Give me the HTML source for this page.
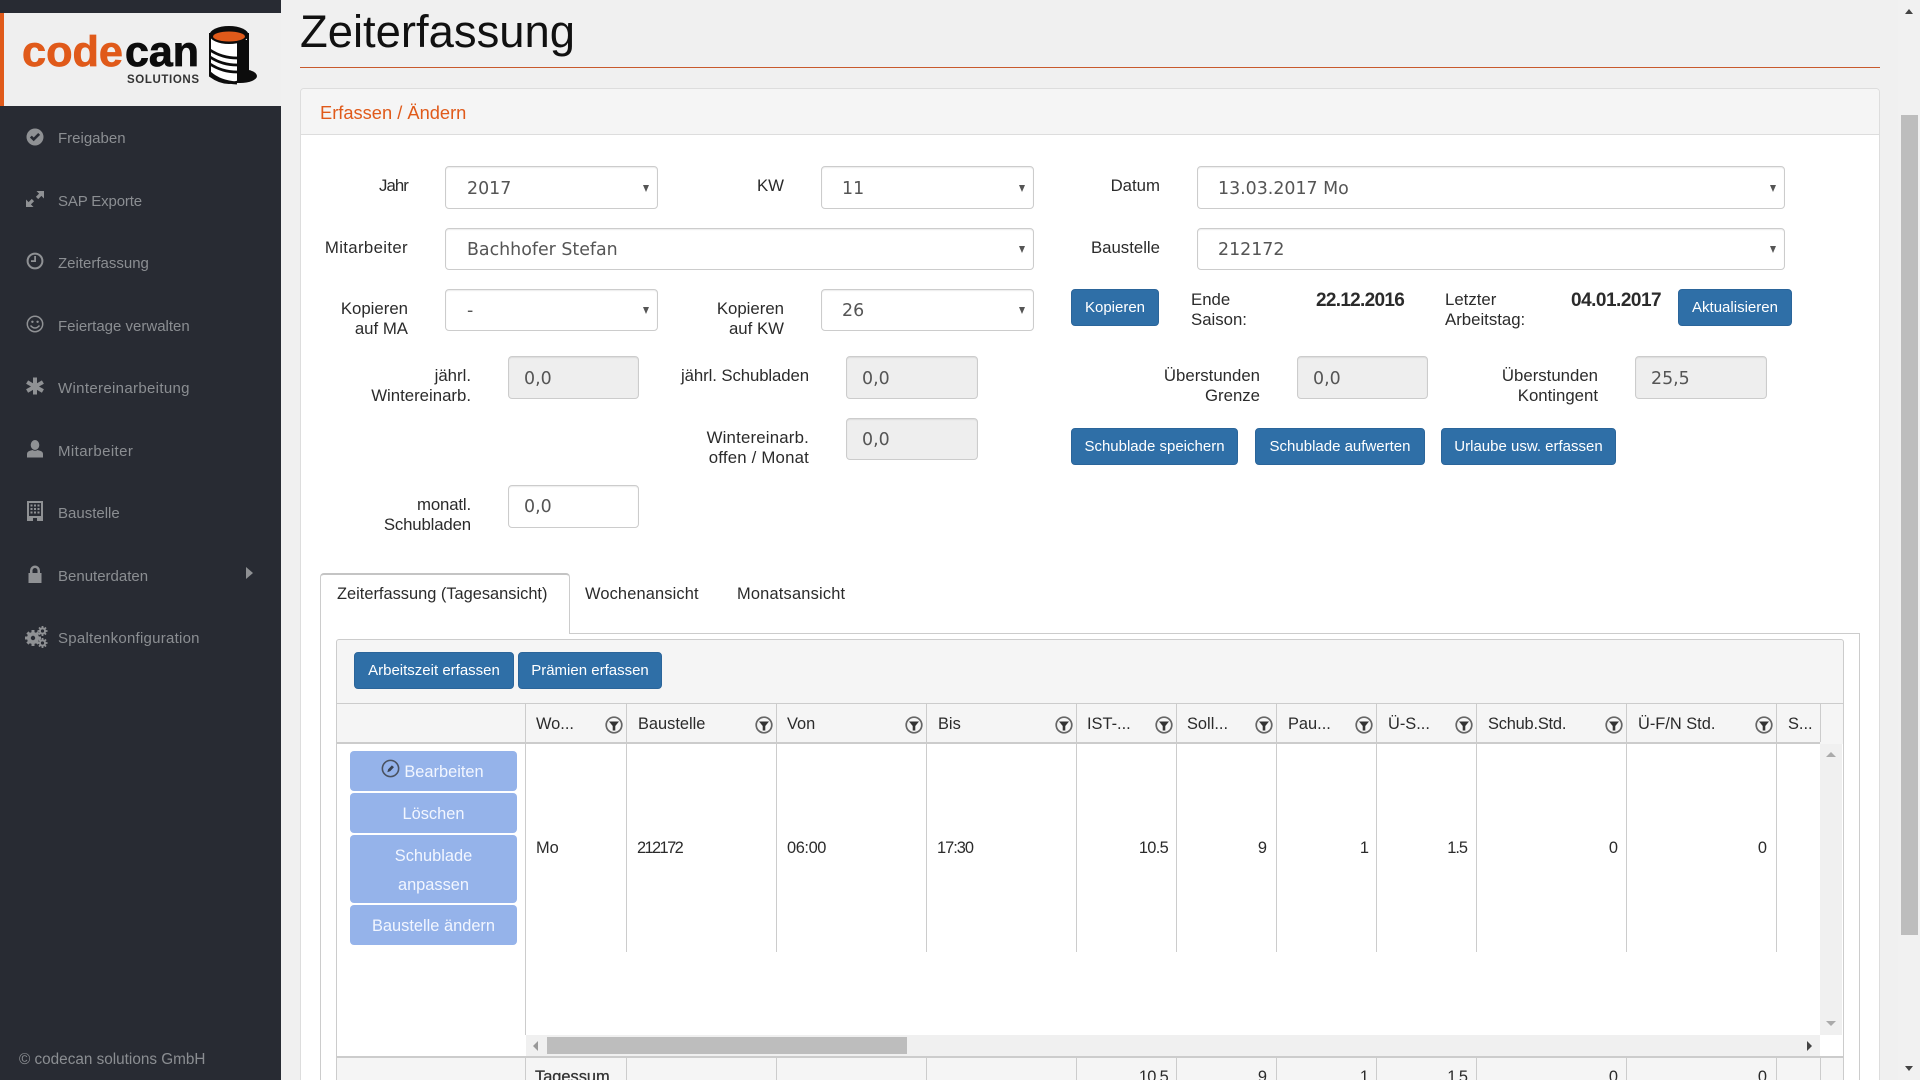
<!DOCTYPE html>
<html lang="de"><head><meta charset="utf-8"><title>Zeiterfassung</title>
<style>
html,body{margin:0;padding:0;width:1920px;height:1080px;overflow:hidden;background:#f0f0f0}
body{position:relative;font-family:"Liberation Sans",sans-serif;color:#2b2b2b}
.a,.t,.r,.c,.s,.i,.b,.v,.tv,.m{position:absolute;box-sizing:border-box}
.t,.r,.c{white-space:nowrap;line-height:20px;font-size:16.8px;margin-top:1px}
.t.h,.r.h{font-size:16.4px}
.r{text-align:right}
.side{left:0;top:0;width:281px;height:1080px;background:#282b33}
.m{left:58px;color:#8b8e92;font-size:15px;line-height:20px;white-space:nowrap;margin-top:1px}
.ic{position:absolute;left:25px;width:20px;height:20px;fill:#8f9194}
.s,.i{border:1px solid #ccc;border-radius:4px;background:#fff;box-shadow:inset 0 1px 1px rgba(0,0,0,.08)}
.i.g{background:#eee}
.s:after{content:"";position:absolute;right:8px;top:50%;margin-top:-3px;border:3.5px solid transparent;border-top:7px solid #555;border-bottom:0}
.v{white-space:nowrap;font-family:"DejaVu Sans",sans-serif;font-size:17.4px;line-height:20px;color:#555;margin-top:1px}
.b{background:#2f6fa7;border:1px solid #2b659a;border-radius:4px;color:#fff;font-size:15px;line-height:35px;text-align:center;white-space:nowrap;height:37px}
.lb{position:absolute;box-sizing:border-box;left:350px;width:167px;background:#95b3ea;border-radius:4px;color:#f2f6ff;font-size:16.4px;text-align:center;line-height:43px}
.line{position:absolute;background:#ccc}
.f{position:absolute;top:716px;width:18px;height:18px}
</style></head><body>
<svg width="0" height="0" style="position:absolute"><defs>
<symbol id="flt" viewBox="0 0 18 18"><circle cx="9" cy="9" r="7.800" fill="none" stroke="#666" stroke-width="1.700"/><path d="M4 5.500h10L10.300 10v4.500H7.700V10z" fill="#333"/></symbol>
</defs></svg>

<div class="a side"></div>
<div class="a" style="left:0;top:13px;width:281px;height:93px;background:#efefef"></div>
<div class="a" style="left:0;top:13px;width:4px;height:93px;background:#e05a1a"></div>
<svg class="a" style="left:0;top:0" width="281" height="106" viewBox="0 0 281 106">
<text x="22" y="66" font-family="Liberation Sans" font-weight="700" font-size="43" fill="#e05a1a" stroke="#e05a1a" stroke-width=".7" textLength="101" lengthAdjust="spacingAndGlyphs">code</text>
<text x="125" y="66" font-family="Liberation Sans" font-weight="700" font-size="43" fill="#0c0c0c" stroke="#0c0c0c" stroke-width=".8" textLength="74" lengthAdjust="spacingAndGlyphs">can</text>
<text x="127" y="83" font-family="Liberation Sans" font-weight="700" font-size="11.5" fill="#333" textLength="72">SOLUTIONS</text>
<ellipse cx="240" cy="76" rx="17" ry="7" fill="#0c0c0c"/>
<path d="M210 34V76Q229 90 248 76V34Z" fill="#fff" stroke="#0c0c0c" stroke-width="2"/>
<path d="M237 40H249V77Q244 82 237 83Z" fill="#0c0c0c"/>
<path d="M210 50Q222 58 237 58M210 57Q222 65 237 65M210 64Q222 72 237 72" fill="none" stroke="#0c0c0c" stroke-width="2.800"/>
<path d="M210 73Q220 82 237 83" fill="none" stroke="#0c0c0c" stroke-width="3"/>
<ellipse cx="229" cy="35" rx="19.500" ry="9" fill="#0c0c0c"/>
<ellipse cx="229" cy="36.500" rx="16" ry="5" fill="#e05a1a"/>
</svg>

<!-- menu -->
<svg class="ic" style="top:127px" viewBox="0 0 20 20"><path fill-rule="evenodd" d="M10 1.500a8.500 8.500 0 1 0 0 17 8.500 8.500 0 0 0 0-17zM8.700 14.300 4.900 10.500l1.900-1.900 1.900 1.900 4.500-4.500 1.900 1.900z"/></svg>
<div class="m" style="top:128px">Freigaben</div>
<svg class="ic" style="top:189px" viewBox="0 0 20 20"><path d="M11.500 2H19V9.500L16.400 6.900 13.200 10.100 10.900 7.800 14.100 4.600zM8.500 18H1V10.500L3.600 13.100 6.800 9.900 9.100 12.200 5.900 15.400z"/></svg>
<div class="m" style="top:191px;letter-spacing:-.15px">SAP Exporte</div>
<svg class="ic" style="top:251px" viewBox="0 0 20 20"><circle cx="10" cy="10" r="7.400" fill="none" stroke="#8f9194" stroke-width="2"/><path d="M9.200 5h1.800v6H6v-1.700h3.200z"/></svg>
<div class="m" style="top:253px">Zeiterfassung</div>
<svg class="ic" style="top:314px" viewBox="0 0 20 20"><circle cx="10" cy="10" r="7.700" fill="none" stroke="#8f9194" stroke-width="1.500"/><circle cx="7.400" cy="7.800" r="1.200"/><circle cx="12.600" cy="7.800" r="1.200"/><path d="M5.500 11.500Q10 16.500 14.500 11.500" fill="none" stroke="#8f9194" stroke-width="1.500"/></svg>
<div class="m" style="top:316px">Feiertage verwalten</div>
<svg class="ic" style="top:376px" viewBox="0 0 20 20"><path d="M8 1.500h4V7.200l4.900-2.800 2 3.400L14 10.500l4.900 2.800-2 3.400L12 13.900v4.600H8v-4.600l-4.900 2.800-2-3.400L6 10.500 1.100 7.800l2-3.400L8 7.200z"/></svg>
<div class="m" style="top:378px;letter-spacing:.33px">Wintereinarbeitung</div>
<svg class="ic" style="top:439px" viewBox="0 0 20 20"><ellipse cx="10" cy="6" rx="4.300" ry="5"/><path d="M2 18.500V15q0-2.500 3-3.300l2.500-.7q2.500 1.500 5 0l2.500.7q3 .8 3 3.300v3.500z"/></svg>
<div class="m" style="top:441px;letter-spacing:.4px">Mitarbeiter</div>
<svg class="ic" style="top:500px;height:22px" viewBox="0 0 20 22"><path fill-rule="evenodd" d="M2 1h16v20H12v-3H8v3H2zM4 3v13h12V3z"/><path d="M5.500 4.500h2v2h-2zM9 4.500h2v2H9zM12.500 4.500h2v2h-2zM5.500 8h2v2h-2zM9 8h2v2H9zM12.500 8h2v2h-2zM5.500 11.500h2v2h-2zM9 11.500h2v2H9zM12.500 11.500h2v2h-2z"/></svg>
<div class="m" style="top:503px">Baustelle</div>
<svg class="ic" style="top:564px" viewBox="0 0 20 20"><path fill-rule="evenodd" d="M3.500 9H5V6.500a5 5 0 0 1 10 0V9h1.500v10h-13zM7.500 9h5V6.500a2.500 2.500 0 0 0-5 0z"/></svg>
<div class="m" style="top:566px">Benuterdaten</div>
<div class="a" style="left:246px;top:567px;border-left:7px solid #8f9194;border-top:6px solid transparent;border-bottom:6px solid transparent"></div>
<svg class="ic" style="top:625px;left:24px;width:24px;height:24px" viewBox="0 0 24 24">
<g fill="#8f9194"><circle cx="9" cy="13" r="6"/><g stroke="#8f9194" stroke-width="3"><path d="M9 5v16M1 13h16M3.400 7.400l11.200 11.200M14.600 7.400 3.400 18.600"/></g></g><circle cx="9" cy="13" r="2.200" fill="#282b33"/>
<g fill="none" stroke="#8f9194"><circle cx="18.500" cy="6" r="2.600" stroke-width="2"/><path stroke-width="1.800" d="M18.500 1v2M18.500 9v2M13.500 6h2M21.500 6h2M15 2.500l1.400 1.400M20.600 8.100 22 9.500M22 2.500l-1.400 1.400M16.400 8.100 15 9.500"/><circle cx="18.500" cy="18" r="2.600" stroke-width="2"/><path stroke-width="1.800" d="M18.500 13v2M18.500 21v2M13.500 18h2M21.500 18h2M15 14.500l1.400 1.400M20.600 20.100l1.400 1.400M22 14.500l-1.400 1.400M16.400 20.100 15 21.500"/></g></svg>
<div class="m" style="top:628px;letter-spacing:.25px">Spaltenkonfiguration</div>
<div class="m" style="left:19px;top:1049px;font-size:15.300px">© codecan solutions GmbH</div>

<!-- page scrollbar -->
<div class="a" style="left:1898px;top:0;width:22px;height:1080px;background:#f1f1f1"></div>
<div class="a" style="left:1901px;top:115px;width:17px;height:820px;background:#bdbdbd"></div>
<div class="a" style="left:1905px;top:9px;border:4.500px solid transparent;border-bottom:5px solid #444;border-top:0"></div>
<div class="a" style="left:1905px;top:1066px;border:4.500px solid transparent;border-top:5px solid #444;border-bottom:0"></div>

<!-- title -->
<div class="a" style="left:300px;top:4px;font-size:45.400px;line-height:56px;color:#111;white-space:nowrap">Zeiterfassung</div>
<div class="a" style="left:300px;top:67px;width:1580px;height:1px;background:#c8592c"></div>

<!-- panel -->
<div class="a" style="left:300px;top:88px;width:1580px;height:1010px;background:#fff;border:1px solid #ddd;border-radius:4px"></div>
<div class="a" style="left:301px;top:89px;width:1578px;height:46px;background:#f5f5f5;border-bottom:1px solid #ddd;border-radius:3px 3px 0 0"></div>
<div class="a" style="left:320px;top:100px;font-size:18.300px;line-height:25px;color:#e05a1a;white-space:nowrap">Erfassen / Ändern</div>

<!-- row 1 -->
<div class="r" style="right:1512px;top:175px;letter-spacing:-.9px">Jahr</div>
<div class="s" style="left:445px;top:166px;width:213px;height:43px"></div><div class="v" style="left:467px;top:178px">2017</div>
<div class="r" style="right:1136px;top:175px">KW</div>
<div class="s" style="left:821px;top:166px;width:213px;height:43px"></div><div class="v" style="left:842px;top:178px">11</div>
<div class="r" style="right:760px;top:175px">Datum</div>
<div class="s" style="left:1197px;top:166px;width:588px;height:43px"></div><div class="v" style="left:1218px;top:178px">13.03.2017 Mo</div>
<!-- row 2 -->
<div class="r" style="right:1512px;top:237px;letter-spacing:.35px">Mitarbeiter</div>
<div class="s" style="left:445px;top:228px;width:589px;height:42px"></div><div class="v" style="left:467px;top:239px">Bachhofer Stefan</div>
<div class="r" style="right:760px;top:237px">Baustelle</div>
<div class="s" style="left:1197px;top:228px;width:588px;height:42px"></div><div class="v" style="left:1218px;top:239px">212172</div>
<!-- row 3 -->
<div class="r" style="right:1512px;top:298px">Kopieren<br>auf MA</div>
<div class="s" style="left:445px;top:289px;width:213px;height:42px"></div><div class="v" style="left:467px;top:300px">-</div>
<div class="r" style="right:1136px;top:298px">Kopieren<br>auf KW</div>
<div class="s" style="left:821px;top:289px;width:213px;height:42px"></div><div class="v" style="left:842px;top:300px">26</div>
<div class="b" style="left:1071px;top:289px;width:88px">Kopieren</div>
<div class="t" style="left:1191px;top:289px">Ende<br>Saison:</div>
<div class="t" style="left:1316px;top:290px;font-weight:700;font-size:19px;letter-spacing:-.7px">22.12.2016</div>
<div class="t" style="left:1445px;top:289px">Letzter<br>Arbeitstag:</div>
<div class="t" style="left:1571px;top:290px;font-weight:700;font-size:19px;letter-spacing:-.5px">04.01.2017</div>
<div class="b" style="left:1678px;top:289px;width:114px">Aktualisieren</div>
<!-- row 4 -->
<div class="r" style="right:1449px;top:365px">jährl.<br>Wintereinarb.</div>
<div class="i g" style="left:508px;top:356px;width:131px;height:43px"></div><div class="v" style="left:524px;top:368px">0,0</div>
<div class="r" style="right:1111px;top:365px;letter-spacing:-.1px">jährl. Schubladen</div>
<div class="i g" style="left:846px;top:356px;width:132px;height:43px"></div><div class="v" style="left:862px;top:368px">0,0</div>
<div class="r" style="right:660px;top:365px">Überstunden<br>Grenze</div>
<div class="i g" style="left:1297px;top:356px;width:131px;height:43px"></div><div class="v" style="left:1313px;top:368px">0,0</div>
<div class="r" style="right:322px;top:365px">Überstunden<br>Kontingent</div>
<div class="i g" style="left:1635px;top:356px;width:132px;height:43px"></div><div class="v" style="left:1651px;top:368px">25,5</div>
<!-- row 5 -->
<div class="r" style="right:1111px;top:427px;letter-spacing:.2px">Wintereinarb.<br>offen / Monat</div>
<div class="i g" style="left:846px;top:418px;width:132px;height:42px"></div><div class="v" style="left:862px;top:429px">0,0</div>
<div class="b" style="left:1071px;top:428px;width:167px">Schublade speichern</div>
<div class="b" style="left:1255px;top:428px;width:170px">Schublade aufwerten</div>
<div class="b" style="left:1441px;top:428px;width:175px">Urlaube usw. erfassen</div>
<!-- row 6 -->
<div class="r" style="right:1449px;top:494px;letter-spacing:-.15px">monatl.<br>Schubladen</div>
<div class="i" style="left:508px;top:485px;width:131px;height:43px"></div><div class="v" style="left:524px;top:496px">0,0</div>

<!-- tabs -->
<div class="a" style="left:320px;top:633px;width:1540px;height:460px;border:1px solid #ccc;border-bottom:0"></div>
<div class="a" style="left:320px;top:573px;width:250px;height:61px;background:#fff;border:1px solid #ccc;border-top:2px solid #c4c4c4;border-bottom:0;border-radius:4px 4px 0 0"></div>
<div class="t h" style="left:337px;top:583px">Zeiterfassung (Tagesansicht)</div>
<div class="t h" style="left:585px;top:583px;letter-spacing:.15px">Wochenansicht</div>
<div class="t h" style="left:737px;top:583px;letter-spacing:.2px">Monatsansicht</div>

<!-- grid container -->
<div class="a" style="left:336px;top:639px;width:1508px;height:460px;background:#f5f5f5;border:1px solid #ccc;border-radius:3px"></div>
<div class="b" style="left:354px;top:652px;width:160px">Arbeitszeit erfassen</div>
<div class="b" style="left:518px;top:652px;width:144px">Prämien erfassen</div>

<div class="line" style="left:337px;top:703px;width:1506px;height:1px"></div>
<div class="a" style="left:337px;top:744px;width:1506px;height:312px;background:#fff"></div>
<div class="line" style="left:337px;top:742px;width:1483px;height:2px"></div>
<!-- scrollbars -->
<div class="a" style="left:1820px;top:744px;width:22px;height:291px;background:#f0f0f0"></div>
<div class="a" style="left:526px;top:1035px;width:1294px;height:21px;background:#f0f0f0"></div>
<div class="a" style="left:547px;top:1037px;width:360px;height:17px;background:#bdbdbd"></div>
<div class="a" style="left:533px;top:1041px;border-right:5px solid #999;border-top:5px solid transparent;border-bottom:5px solid transparent"></div>
<div class="a" style="left:1807px;top:1041px;border-left:5px solid #444;border-top:5px solid transparent;border-bottom:5px solid transparent"></div>
<div class="a" style="left:1826px;top:752px;border:5px solid transparent;border-bottom:5px solid #aaa;border-top:0"></div>
<div class="a" style="left:1826px;top:1021px;border:5px solid transparent;border-top:5px solid #aaa;border-bottom:0"></div>
<div class="line" style="left:337px;top:1056px;width:1506px;height:2px"></div>

<!-- separators -->
<div class="line" style="left:525px;top:704px;width:1px;height:331px"></div>
<div class="line" style="left:525px;top:1058px;width:1px;height:22px"></div>
<div class="line" style="left:626px;top:704px;width:1px;height:248px"></div><div class="line" style="left:626px;top:1058px;width:1px;height:22px"></div>
<div class="line" style="left:776px;top:704px;width:1px;height:248px"></div><div class="line" style="left:776px;top:1058px;width:1px;height:22px"></div>
<div class="line" style="left:926px;top:704px;width:1px;height:248px"></div><div class="line" style="left:926px;top:1058px;width:1px;height:22px"></div>
<div class="line" style="left:1076px;top:704px;width:1px;height:248px"></div><div class="line" style="left:1076px;top:1058px;width:1px;height:22px"></div>
<div class="line" style="left:1176px;top:704px;width:1px;height:248px"></div><div class="line" style="left:1176px;top:1058px;width:1px;height:22px"></div>
<div class="line" style="left:1276px;top:704px;width:1px;height:248px"></div><div class="line" style="left:1276px;top:1058px;width:1px;height:22px"></div>
<div class="line" style="left:1376px;top:704px;width:1px;height:248px"></div><div class="line" style="left:1376px;top:1058px;width:1px;height:22px"></div>
<div class="line" style="left:1476px;top:704px;width:1px;height:248px"></div><div class="line" style="left:1476px;top:1058px;width:1px;height:22px"></div>
<div class="line" style="left:1626px;top:704px;width:1px;height:248px"></div><div class="line" style="left:1626px;top:1058px;width:1px;height:22px"></div>
<div class="line" style="left:1776px;top:704px;width:1px;height:248px"></div><div class="line" style="left:1776px;top:1058px;width:1px;height:22px"></div>
<div class="line" style="left:1820px;top:704px;width:1px;height:38px"></div><div class="line" style="left:1820px;top:1058px;width:1px;height:22px"></div>

<!-- header -->
<div class="t h" style="left:536px;top:713px">Wo...</div>
<div class="t h" style="left:638px;top:713px">Baustelle</div>
<div class="t h" style="left:787px;top:713px">Von</div>
<div class="t h" style="left:938px;top:713px">Bis</div>
<div class="t h" style="left:1087px;top:713px">IST-...</div>
<div class="t h" style="left:1187px;top:713px">Soll...</div>
<div class="t h" style="left:1288px;top:713px">Pau...</div>
<div class="t h" style="left:1388px;top:713px">Ü-S...</div>
<div class="t h" style="left:1488px;top:713px;letter-spacing:-.2px">Schub.Std.</div>
<div class="t h" style="left:1638px;top:713px">Ü-F/N Std.</div>
<div class="t h" style="left:1788px;top:713px">S...</div>
<svg class="f" style="left:605px"><use href="#flt"/></svg>
<svg class="f" style="left:755px"><use href="#flt"/></svg>
<svg class="f" style="left:905px"><use href="#flt"/></svg>
<svg class="f" style="left:1055px"><use href="#flt"/></svg>
<svg class="f" style="left:1155px"><use href="#flt"/></svg>
<svg class="f" style="left:1255px"><use href="#flt"/></svg>
<svg class="f" style="left:1355px"><use href="#flt"/></svg>
<svg class="f" style="left:1455px"><use href="#flt"/></svg>
<svg class="f" style="left:1605px"><use href="#flt"/></svg>
<svg class="f" style="left:1755px"><use href="#flt"/></svg>

<!-- row -->
<div class="lb" style="top:751px;height:40px;padding-right:2px"><svg width="19" height="19" viewBox="0 0 18 18" style="vertical-align:-1px;margin-right:4px"><circle cx="9" cy="9" r="7.700" fill="none" stroke="#4a5260" stroke-width="1.500"/><path d="M6 12.500l.8-2.800 3.500-3.700 2 1.700-3.500 3.800z" fill="#3a4250"/></svg>Bearbeiten</div>
<div class="lb" style="top:793px;height:40px">Löschen</div>
<div class="lb" style="top:835px;height:68px;line-height:28.500px;padding-top:7px">Schublade<br>anpassen</div>
<div class="lb" style="top:905px;height:40px">Baustelle ändern</div>

<div class="t h" style="left:536px;top:837px">Mo</div>
<div class="t h" style="left:637px;top:837px;letter-spacing:-1.600px">212172</div>
<div class="t h" style="left:787px;top:837px;letter-spacing:-.4px">06:00</div>
<div class="t h" style="left:937px;top:837px;letter-spacing:-1px">17:30</div>
<div class="r h" style="right:752px;top:837px;letter-spacing:-.7px">10.5</div>
<div class="r h" style="right:653px;top:837px">9</div>
<div class="r h" style="right:551px;top:837px">1</div>
<div class="r h" style="right:453px;top:837px;letter-spacing:-1px">1.5</div>
<div class="r h" style="right:302px;top:837px">0</div>
<div class="r h" style="right:153px;top:837px">0</div>

<!-- footer -->
<div class="t h" style="left:535px;top:1066px;-webkit-text-stroke:.3px #333;color:#333">Tagessum</div>
<div class="r h" style="right:752px;top:1066px;letter-spacing:-.7px">10.5</div>
<div class="r h" style="right:653px;top:1066px">9</div>
<div class="r h" style="right:551px;top:1066px">1</div>
<div class="r h" style="right:453px;top:1066px;letter-spacing:-1px">1.5</div>
<div class="r h" style="right:302px;top:1066px">0</div>
<div class="r h" style="right:153px;top:1066px">0</div>
</body></html>
